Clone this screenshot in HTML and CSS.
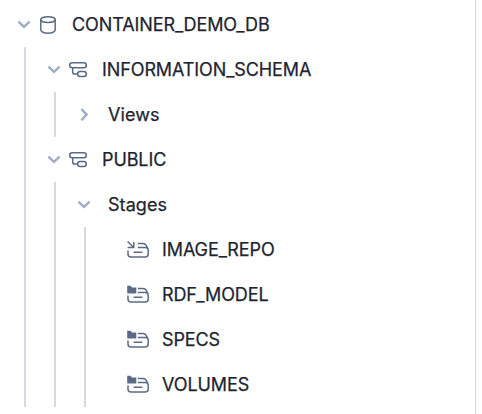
FILE: index.html
```html
<!DOCTYPE html>
<html lang="en">
<head>
<meta charset="utf-8">
<title>Databases</title>
<link rel="stylesheet" href="styles.css">
</head>
<body>
<svg class="defs" width="0" height="0" aria-hidden="true">
  <symbol id="down" viewBox="0 0 16 16"><path d="M2.4 4.7 8 9.9l5.6-5.2"/></symbol>
  <symbol id="right" viewBox="0 0 16 16"><path d="M5.4 2 10.6 7.6l-5.2 5.6"/></symbol>
  <symbol id="database" viewBox="0 0 24 24"><ellipse cx="12" cy="6.6" rx="7.2" ry="2.9"/><path d="M4.8 6.6v10.5c0 1.7 3.2 3.1 7.2 3.1s7.2-1.4 7.2-3.1V6.6"/></symbol>
  <symbol id="schema" viewBox="0 0 24 24"><rect x="3.7" y="4.7" width="16.6" height="5" rx="2.5"/><rect x="11.6" y="13.5" width="8.7" height="5" rx="2.5"/><path d="M6.7 9.7v4.2c0 1.5.8 2.1 2.2 2.1h2.7"/></symbol>
  <symbol id="drawer" viewBox="0 0 24 24"><path d="M11.8 5.5h5c1.6 0 2.8.6 3.5 2l1.6 3.1M11.8 9.4h7.6c1.9 0 2.8 1 2.8 2.7v4c0 2-1 3-3 3H5c-2 0-3-1-3-3v-3.5M7.6 14.3h8.8"/></symbol>
  <symbol id="folder" viewBox="0 0 24 24"><path class="solid" d="M1.2 2.8h3.3l1.5 1.7h4.3v6.1H2.2c-.6 0-1-.4-1-1z"/></symbol>
  <symbol id="arrow" viewBox="0 0 24 24"><path d="m1.6 3.5 5.9 5.8M7.8 3.9v5.6H1.6"/></symbol>
</svg>
<main class="panel">
  <div class="row">
    <svg class="chevron"><use href="#down"/></svg>
    <svg class="icon"><use href="#database"/></svg>
    <span class="label">CONTAINER_DEMO_DB</span>
  </div>
  <div class="group">
    <div class="row">
      <svg class="chevron"><use href="#down"/></svg>
      <svg class="icon"><use href="#schema"/></svg>
      <span class="label">INFORMATION_SCHEMA</span>
    </div>
    <div class="group">
      <div class="row category">
        <svg class="chevron"><use href="#right"/></svg>
        <span class="label">Views</span>
      </div>
    </div>
    <div class="row">
      <svg class="chevron"><use href="#down"/></svg>
      <svg class="icon"><use href="#schema"/></svg>
      <span class="label">PUBLIC</span>
    </div>
    <div class="group">
      <div class="row category">
        <svg class="chevron"><use href="#down"/></svg>
        <span class="label">Stages</span>
      </div>
      <div class="group">
        <div class="row leaf">
          <svg class="icon"><use href="#drawer"/><use href="#arrow"/></svg>
          <span class="label">IMAGE_REPO</span>
        </div>
        <div class="row leaf">
          <svg class="icon"><use href="#drawer"/><use href="#folder"/></svg>
          <span class="label">RDF_MODEL</span>
        </div>
        <div class="row leaf">
          <svg class="icon"><use href="#drawer"/><use href="#folder"/></svg>
          <span class="label">SPECS</span>
        </div>
        <div class="row leaf">
          <svg class="icon"><use href="#drawer"/><use href="#folder"/></svg>
          <span class="label">VOLUMES</span>
        </div>
      </div>
    </div>
  </div>
</main>
</body>
</html>
```
FILE: styles.css
```css
body {
  margin: 0;
  background: #fff;
  color: #1e252f;
  font-family: Inter, "Liberation Sans", sans-serif;
  font-size: 18px;
  font-weight: 400;
}
.defs { display: block; }
.panel {
  box-sizing: border-box;
  width: 476px;
  height: 414px;
  padding-top: 2px;
  border-right: 1px solid #d5d9e4;
}
.row {
  display: flex;
  align-items: center;
  height: 45px;
  padding-left: 16px;
}
.group {
  margin-left: 24px;
  border-left: 2px solid #d5d9e4;
}
.group > .row { padding-left: 20px; }
.group .group { margin-left: 28px; }
.chevron {
  flex: none;
  width: 16px;
  height: 16px;
  fill: none;
  stroke: #9fabc1;
  stroke-width: 2.4;
}
.icon {
  flex: none;
  width: 24px;
  height: 24px;
  margin: 0 12px 0 4px;
  fill: none;
  stroke: #5d6a85;
  stroke-width: 1.5;
}
.solid { fill: #5d6a85; stroke: none; }
.group > .leaf { padding-left: 36px; }
.label {
  line-height: 24px;
  letter-spacing: -0.1px;
  white-space: nowrap;
  -webkit-text-stroke: 0.25px currentColor;
}
.category .label {
  margin-left: 16px;
  letter-spacing: 0.06px;
}
```
